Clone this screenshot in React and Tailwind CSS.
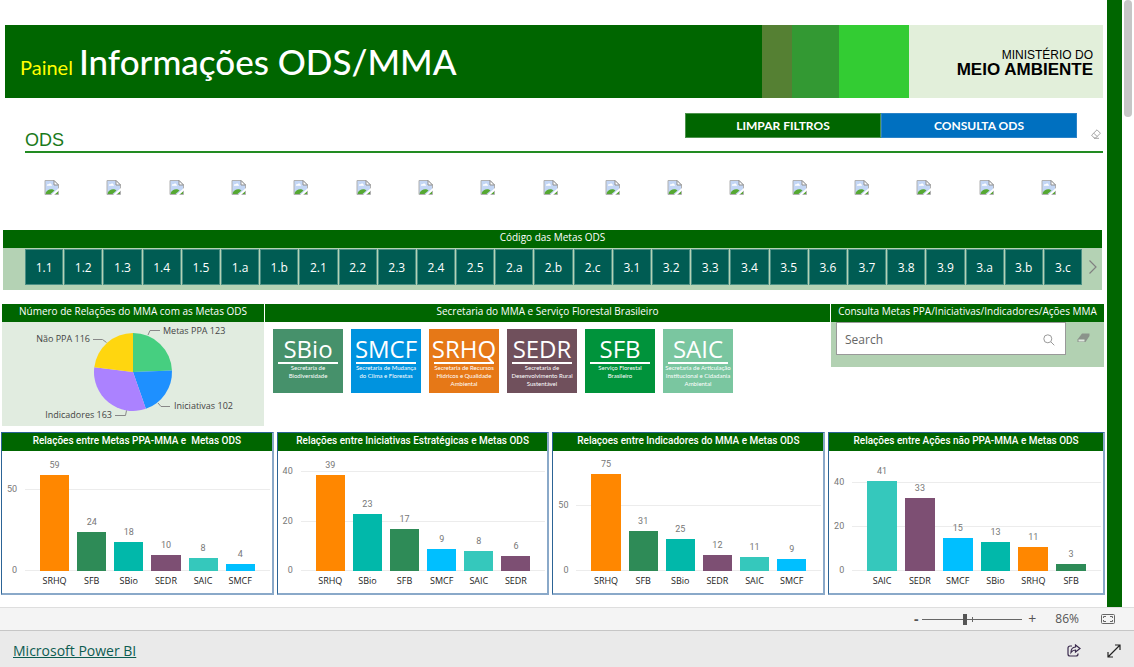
import React from "react";

const CODES = "1.1 1.2 1.3 1.4 1.5 1.a 1.b 2.1 2.2 2.3 2.4 2.5 2.a 2.b 2.c 3.1 3.2 3.3 3.4 3.5 3.6 3.7 3.8 3.9 3.a 3.b 3.c".split(" ");

const COLORS = {
  SRHQ: "bg-[#ff8700]",
  SFB: "bg-[#2e8b57]",
  SBio: "bg-[#01b8aa]",
  SEDR: "bg-[#7d4f73]",
  SAIC: "bg-[#35c8bc]",
  SMCF: "bg-[#00bfff]",
};

const CHARTS = [
  { title: "Relações entre Metas PPA-MMA e \u00a0Metas ODS", scale: 1.627, ticks: [0, 50], data: [["SRHQ", 59], ["SFB", 24], ["SBio", 18], ["SEDR", 10], ["SAIC", 8], ["SMCF", 4]] },
  { title: "Relações entre Iniciativas Estratégicas e Metas ODS", scale: 2.47, ticks: [0, 20, 40], data: [["SRHQ", 39], ["SBio", 23], ["SFB", 17], ["SMCF", 9], ["SAIC", 8], ["SEDR", 6]] },
  { title: "Relaçoes entre Indicadores do MMA e Metas ODS", scale: 1.295, ticks: [0, 50], data: [["SRHQ", 75], ["SFB", 31], ["SBio", 25], ["SEDR", 12], ["SAIC", 11], ["SMCF", 9]] },
  { title: "Relações entre Ações não PPA-MMA e Metas ODS", scale: 2.2, ticks: [0, 20, 40], data: [["SAIC", 41], ["SEDR", 33], ["SMCF", 15], ["SBio", 13], ["SRHQ", 11], ["SFB", 3]] },
];

const AGENCIES = [
  { name: "SBio", lines: ["Secretaria de", "Biodiversidade"], color: "bg-[#46916b]" },
  { name: "SMCF", lines: ["Secretaria de Mudança", "do Clima e Florestas"], color: "bg-[#0093df]" },
  { name: "SRHQ", lines: ["Secretaria de Recursos", "Hídricos e Qualidade", "Ambiental"], color: "bg-[#e67817]" },
  { name: "SEDR", lines: ["Secretaria de", "Desenvolvimento Rural", "Sustentável"], color: "bg-[#70505c]" },
  { name: "SFB", lines: ["Serviço Florestal", "Brasileiro"], color: "bg-[#00933b]" },
  { name: "SAIC", lines: ["Secretaria de Articulação", "Institucional e Cidadania", "Ambiental"], color: "bg-[#7ac6a0]" },
];

function MissingImage() {
  return (
    <svg width="16" height="16" viewBox="0 0 16 16" role="img" aria-label="ODS">
      <path d="M1 .5h9l4.500 4.500v9.500H1z" fill="#c3d6f5" />
      <path d="M3 5.800c-.6-1.300.8-2 1.500-1.500C5.200 3 7.500 3.400 7.500 4.800c1 0 1 1 0 1z" fill="#fff" />
      <path d="M1.500 14v-1C3 10 6 8.500 9 9.500l1.500 1L6.500 14z" fill="#56a832" />
      <path d="M10.500 14l3.500-3v3z" fill="#56a832" />
      <path d="M1 14.500V.5h9l4.500 4.500v9.500z" fill="none" stroke="#b0b0b0" />
      <path d="M10 .5v4.500h4.500z" fill="#fff" stroke="#8f8f8f" />
      <path d="M6.500 15.500 15.500 7.500v2.500L9.500 15.500z" fill="#fff" />
    </svg>
  );
}

function PanelTitle({ children }) {
  return <h2 className="h-[18px] bg-[#006600] px-1 text-center text-[10px] leading-[15px] font-medium whitespace-nowrap text-white">{children}</h2>;
}

function BarChart({ title, scale, ticks, data }) {
  return (
    <section className="min-w-0 border border-r-2 border-b-2 border-[#2c6496] border-r-[#8aa9c9] border-b-[#8aa9c9] bg-white">
      <PanelTitle>{title}</PanelTitle>
      <div className="relative mr-[2px] ml-[23px] flex h-[120px] items-end gap-2 px-[15px]">
        {ticks.map((t) => (
          <div key={t} className="absolute inset-x-0 h-px bg-[#ececec]" style={{ bottom: Math.round(t * scale) }}>
            <span className="absolute -top-2 right-full mr-2 text-[9px] leading-4 text-[#777]">{t}</span>
          </div>
        ))}
        {data.map(([name, value]) => (
          <div key={name} className="relative flex flex-1 flex-col text-center">
            <span className="mb-1 text-[9px] leading-3 text-[#777]">{value}</span>
            <div className={COLORS[name]} style={{ height: Math.round(value * scale) }} />
          </div>
        ))}
      </div>
      <div className="mr-[2px] ml-[23px] flex h-[22px] px-[11px] pt-1">
        {data.map(([name]) => (
          <span key={name} className="flex-1 text-center font-['Open_Sans'] text-[9px] leading-3 text-[#222]">{name}</span>
        ))}
      </div>
    </section>
  );
}

const SLICES = [
  { value: 123, color: "#46cf80" },
  { value: 102, color: "#1e90ff" },
  { value: 163, color: "#ab82ff" },
  { value: 116, color: "#ffd60f" },
];

function PieChart() {
  const total = SLICES.reduce((sum, s) => sum + s.value, 0);
  const point = (v) => {
    const a = (v / total) * 2 * Math.PI;
    return `${131 + 39 * Math.sin(a)} ${50 - 39 * Math.cos(a)}`;
  };
  let start = 0;
  return (
    <svg className="mx-auto block" width="262" height="104" viewBox="0 0 262 104" role="img" aria-label="Número de Relações do MMA com as Metas ODS">
      {SLICES.map(({ value, color }) => {
        const from = point(start);
        start += value;
        return <path key={color} d={`M131 50L${from}A39 39 0 0 1 ${point(start)}Z`} fill={color} />;
      })}
      <g fill="none" stroke="#888">
        <path d="M146 13l2-4.500h10" />
        <path d="M91 17.500h9.500l4 3" />
        <path d="M156 81l3 3.500h9" />
        <path d="M113 93.500h10.500l1-5" />
      </g>
      <g fill="#444" className="text-[9px]">
        <text x="161" y="12">Metas PPA 123</text>
        <text x="88" y="20" textAnchor="end">Não PPA 116</text>
        <text x="172" y="87">Iniciativas 102</text>
        <text x="110" y="96" textAnchor="end">Indicadores 163</text>
      </g>
    </svg>
  );
}

export default function App() {
  return (
    <div className="flex min-h-screen flex-col bg-white font-['Open_Sans',sans-serif]">
      <div className="flex flex-1">
        <main className="min-w-0 flex-1 pt-[25px]">
          <header className="mr-1 ml-[5px] flex h-[73px]">
            <div className="flex flex-1 items-baseline gap-[6px] bg-[#006600] pt-3 pl-[15px] whitespace-nowrap">
              <span className="font-['Lato'] text-xl text-[#ffff00]">Painel</span>
              <h1 className="font-['Lato'] text-[35px] leading-[48px] font-medium text-white">Informações ODS/MMA</h1>
            </div>
            <div className="w-[30px] bg-[#558033]" />
            <div className="w-[47px] bg-[#339933]" />
            <div className="w-[70px] bg-[#33cc33]" />
            <div className="flex w-[194px] flex-col items-end justify-center bg-[#e2efda] pt-[2px] pr-[10px] font-['Liberation_Sans'] text-black">
              <span className="text-xs leading-[14px]">MINISTÉRIO DO</span>
              <span className="text-[17px] leading-4 font-bold">MEIO AMBIENTE</span>
            </div>
          </header>

          <div className="mt-[15px] mr-1 ml-[25px] flex h-10 items-start border-b-2 border-[#228b22] pr-[2px]">
            <h2 className="mt-[15px] font-['Liberation_Sans'] text-lg leading-6 text-[#1a7a1a]">ODS</h2>
            <div className="ml-auto flex font-['Lato'] text-xs font-bold text-white">
              <button className="h-[25px] w-[196px] border border-[#4d944d] bg-[#006600]">LIMPAR FILTROS</button>
              <button className="h-[25px] w-[196px] border border-[#2b83c8] bg-[#0070c0]">CONSULTA ODS</button>
            </div>
            <button className="mt-4 ml-[14px]" aria-label="Limpar">
              <svg width="10" height="10" viewBox="0 0 10 10" fill="none" stroke="#999" strokeWidth=".9">
                <path d="M.6 6.200 6 .8l3.400 3.400L4.600 9H3.200zM2.800 4.200l3.400 3.400M3 9.300h5" />
              </svg>
            </button>
          </div>

          <div className="mt-[27px] mr-[27px] ml-[21px] flex">
            {CODES.slice(0, 17).map((c) => (
              <button key={c} className="flex flex-1 justify-center"><MissingImage /></button>
            ))}
          </div>

          <section className="mt-[34px] mr-[5px] ml-[3px] bg-[#b4d2b4]">
            <PanelTitle>Código das Metas ODS</PanelTitle>
            <div className="flex pt-px pb-[5px] pl-[22px]">
              <div className="flex flex-1 gap-px">
                {CODES.map((c) => (
                  <button key={c} className="h-9 min-w-0 flex-1 border border-[#4a8f84] bg-[#005c53] pt-px text-xs font-medium text-white">{c}</button>
                ))}
              </div>
              <button className="flex w-5 items-center justify-center pl-[2px]" aria-label="Próximo">
                <svg width="8" height="14" viewBox="0 0 8 14" fill="none" stroke="#808080" strokeWidth="1.200"><path d="m.5.500 6.500 6.500-6.500 6.500" /></svg>
              </button>
            </div>
          </section>

          <div className="mt-[14px] mr-[3px] ml-[2px] flex gap-px">
            <section className="w-[262px] bg-[#e1ece0]">
              <PanelTitle>Número de Relações do MMA com as Metas ODS</PanelTitle>
              <PieChart />
            </section>
            <section className="flex-1">
              <PanelTitle>Secretaria do MMA e Serviço Florestal Brasileiro</PanelTitle>
              <div className="flex gap-2 pt-[7px] pl-2">
                {AGENCIES.map(({ name, lines, color }) => (
                  <button key={name} className={`${color} flex h-16 w-[70px] flex-col items-center overflow-hidden pt-[7px] text-white`}>
                    <span className="font-['Open_Sans'] text-2xl leading-[26px]">{name}</span>
                    <span className="h-[2px] w-[60px] shrink-0 bg-white" />
                    {lines.map((l) => (
                      <span key={l} className="font-['Lato'] text-[6px] leading-2 whitespace-nowrap">{l}</span>
                    ))}
                  </button>
                ))}
              </div>
            </section>
            <section className="w-[273px] self-start bg-[#b2d1b2]">
              <PanelTitle>Consulta Metas PPA/Iniciativas/Indicadores/Ações MMA</PanelTitle>
              <div className="flex items-start pb-3 pl-[5px]">
                <div className="flex h-[33px] w-[230px] items-center border border-[#999] bg-white pt-[2px] pr-[10px] pl-2">
                  <input aria-label="Search" placeholder="Search" className="min-w-0 flex-1 text-xs outline-none placeholder:text-[#666]" />
                  <svg width="12" height="12" viewBox="0 0 12 12" fill="none" stroke="#999"><circle cx="4.800" cy="4.800" r="4" /><path d="m7.800 7.800 3.500 3.500" /></svg>
                </div>
                <button className="mt-[11px] ml-[11px]" aria-label="Limpar">
                  <svg width="13" height="10" viewBox="0 0 13 10"><path d="M5 .5h7.500v2.500L8.500 9H.5V6.500z" fill="#8b938b" /><path d="M1.500 6.500h6v2h-6z" fill="#dfe8df" /></svg>
                </button>
              </div>
            </section>
          </div>

          <div className="mt-[6px] mr-[2px] mb-3 ml-px grid grid-cols-[272fr_272fr_272fr_276fr] gap-[3px] font-['Roboto']">
            {CHARTS.map((c) => (
              <BarChart key={c.title} {...c} />
            ))}
          </div>
        </main>
        <div className="w-[15px] bg-[#006600]" />
        <div className="w-3 bg-white px-[2px]">
          <div className="h-[117px] rounded-full bg-[#c6c6c6]" />
        </div>
      </div>

      <div className="flex h-[23px] items-center justify-end border-t border-[#dedede] bg-[#f4f4f4] pr-[19px] text-[#555]">
        <button className="w-3 text-sm leading-5 font-bold" aria-label="Diminuir zoom">-</button>
        <div className="relative flex w-[100px] items-center">
          <input
            type="range"
            aria-label="Zoom"
            defaultValue="42"
            className="h-3 w-full appearance-none bg-transparent [&::-webkit-slider-runnable-track]:h-px [&::-webkit-slider-runnable-track]:bg-[#666] [&::-webkit-slider-thumb]:-mt-[5px] [&::-webkit-slider-thumb]:h-[11px] [&::-webkit-slider-thumb]:w-1 [&::-webkit-slider-thumb]:appearance-none [&::-webkit-slider-thumb]:bg-[#555]"
          />
          <span className="absolute left-1/2 h-[5px] w-px bg-[#666]" />
        </div>
        <button className="ml-1 w-3 text-sm leading-5" aria-label="Aumentar zoom">+</button>
        <span className="ml-[17px] text-xs">86%</span>
        <button className="ml-[22px]" aria-label="Ajustar à página">
          <svg className="block" width="14" height="10" viewBox="0 0 14 10" fill="none" stroke="#666"><rect x=".5" y=".5" width="13" height="9" rx="1" /><path d="M5 2.500H2.500V4M9 2.500h2.500V4M5 7.500H2.500V6M9 7.500h2.500V6" /></svg>
        </button>
      </div>
      <footer className="flex h-[37px] items-center border-t border-[#c6c6c6] bg-[#eaeaea] pt-[3px] pr-[13px] pl-[13px]">
        <a href="#" className="text-sm text-[#0d5c51] underline">Microsoft Power BI</a>
        <button className="ml-auto" aria-label="Compartilhar">
          <svg width="14" height="14" viewBox="0 0 14 14" fill="none" stroke="#3a2a4d" strokeWidth="1.200"><path d="M5 2H3a2 2 0 0 0-2 2v6a2 2 0 0 0 2 2h6a2 2 0 0 0 2-2V9.500" /><path d="M8.500 1 13 4.500 8.500 8V6C6 6 5 7 4 8.500 4 5.500 5.500 3.200 8.500 3z" /></svg>
        </button>
        <button className="ml-[26px]" aria-label="Tela cheia">
          <svg width="14" height="14" viewBox="0 0 14 14" fill="none" stroke="#222" strokeWidth="1.200"><path d="M1 13 13 1M8 1h5v5M1 8v5h5" /></svg>
        </button>
      </footer>
    </div>
  );
}
